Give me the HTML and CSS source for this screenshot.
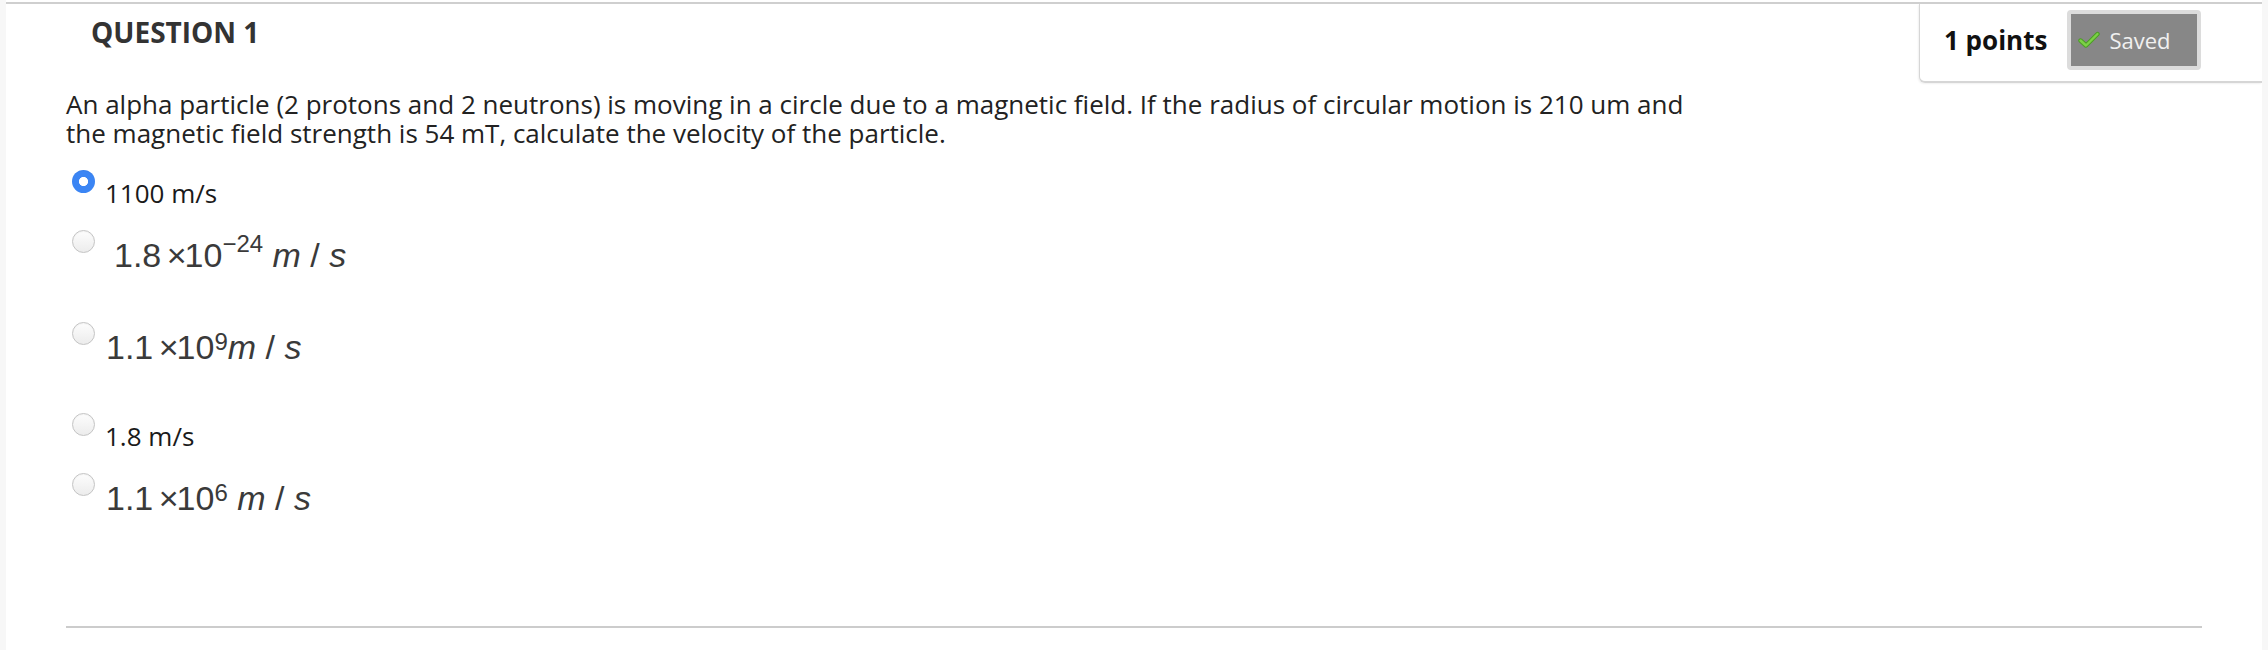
FILE: index.html
```html
<!DOCTYPE html>
<html lang="en">
<head>
<meta charset="utf-8">
<title>Question 1</title>
<link rel="stylesheet" href="styles.css">
</head>
<body>
<div class="main">
  <div class="question">
    <div class="qhead">
      <h2 class="qtitle">QUESTION 1</h2>
      <div class="qpanel">
        <span class="points">1 points</span>
        <span class="saved">
          <span class="saved-inner">
            <svg class="check" width="22" height="18" viewBox="0 0 22 18" aria-hidden="true">
              <path d="M2.5 9.5 L8 14.5 L19.5 3" fill="none" stroke="#4a9e24" stroke-width="4.4" stroke-linecap="round" stroke-linejoin="round"/>
              <path d="M2.5 9.5 L8 14.5 L19.5 3" fill="none" stroke="#7cd046" stroke-width="2.4" stroke-linecap="round" stroke-linejoin="round"/>
            </svg>
            <span class="saved-text">Saved</span>
          </span>
        </span>
      </div>
    </div>
    <p class="qtext">An alpha particle (2 protons and 2 neutrons) is moving in a circle due to a magnetic field. If the radius of circular motion is 210 um and the magnetic field strength is 54 mT, calculate the velocity of the particle.</p>
    <ul class="options">
      <li class="opt opt-text">
        <span class="radio radio-on"></span>
        <span class="label">1100 m/s</span>
      </li>
      <li class="opt opt-math">
        <span class="radio"></span>
        <span class="math math-wide">1.8 <span class="times">×</span>10<span class="sup sup-high">−24</span> <i>m</i> / <i>s</i></span>
      </li>
      <li class="opt opt-math">
        <span class="radio"></span>
        <span class="math">1.1 <span class="times">×</span>10<span class="sup sup-low">9</span><i>m</i> / <i>s</i></span>
      </li>
      <li class="opt opt-text">
        <span class="radio"></span>
        <span class="label">1.8 m/s</span>
      </li>
      <li class="opt opt-math">
        <span class="radio"></span>
        <span class="math">1.1 <span class="times">×</span>10<span class="sup sup-mid">6</span> <i>m</i> / <i>s</i></span>
      </li>
    </ul>
    <hr class="qrule">
  </div>
</div>
</body>
</html>
```

FILE: styles.css
```css
* { box-sizing: border-box; }

html, body {
  margin: 0;
  padding: 0;
}

body {
  background: #f7f7f7;
  font-family: "Open Sans", "Noto Sans", sans-serif;
  color: #222;
}

.main {
  margin: 0 6px;
  background: #fff;
  height: 650px;
  padding-top: 2px;
}

.question {
  border-top: 2px solid #cfcfcf;
}

.qhead {
  display: flex;
  justify-content: space-between;
  align-items: flex-start;
}

.qtitle {
  margin: 0;
  padding: 9px 0 0 85px;
  font-size: 28px;
  font-weight: 700;
  color: #333;
  line-height: 38px;
}

.qpanel {
  display: flex;
  align-items: center;
  gap: 20px;
  width: 343px;
  height: 79px;
  padding: 0 0 5px 24px;
  border-left: 1px solid #d6d6d6;
  border-bottom: 2px solid #d6d6d6;
  border-bottom-left-radius: 6px;
  box-shadow: -1px 1px 2px rgba(0,0,0,0.06);
}

.points {
  font-size: 26px;
  font-weight: 700;
  color: #111;
}

.saved {
  display: block;
  width: 134px;
  height: 60px;
  border: 4px solid #dcdcdc;
  border-radius: 4px;
  background: #dcdcdc;
}

.saved-inner {
  display: flex;
  align-items: center;
  gap: 9px;
  height: 100%;
  padding-left: 7px;
  background: #878787;
}

.check { display: block; }

.saved-text {
  font-size: 22px;
  color: #f0f0f0;
}

.qtext {
  margin: 7px 0 0 60px;
  max-width: 1640px;
  font-size: 26px;
  line-height: 29px;
  color: #222;
}

.options {
  list-style: none;
  margin: 22px 0 0 66px;
  padding: 0;
}

.opt {
  display: flex;
  align-items: flex-start;
}

.opt-text { height: 60px; }
.opt-math { height: 92px; }
.opt-math + .opt-math { height: 91px; }

.radio {
  flex: none;
  width: 23px;
  height: 23px;
  border-radius: 50%;
  border: 1px solid #c4c4c4;
  background: linear-gradient(#fdfdfd, #ececec);
  box-shadow: inset 0 1px 1px rgba(0,0,0,0.04);
}

.radio-on {
  border: none;
  background: radial-gradient(circle, #fff 0 4.2px, #3b85f4 5px);
}

.label {
  margin-left: 10px;
  padding-top: 8px;
  font-size: 26px;
  line-height: 30px;
  color: #1a1a1a;
}

.math {
  margin-left: 11px;
  padding-top: 5px;
  font-family: "Liberation Sans", Arial, sans-serif;
  font-size: 34px;
  line-height: 40px;
  color: #3a3a3a;
  white-space: nowrap;
}

.math-wide { margin-left: 19px; }

.math i { font-style: italic; }

.times { margin: 0 -2px 0 -4px; }

.sup {
  font-size: 24px;
  line-height: 0;
}

.sup-high { vertical-align: 15px; }
.sup-mid { vertical-align: 9px; }
.sup-low { vertical-align: 9px; }

.qrule {
  margin: 61px 60px 0;
  border: none;
  border-top: 2px solid #cccccc;
}
```
